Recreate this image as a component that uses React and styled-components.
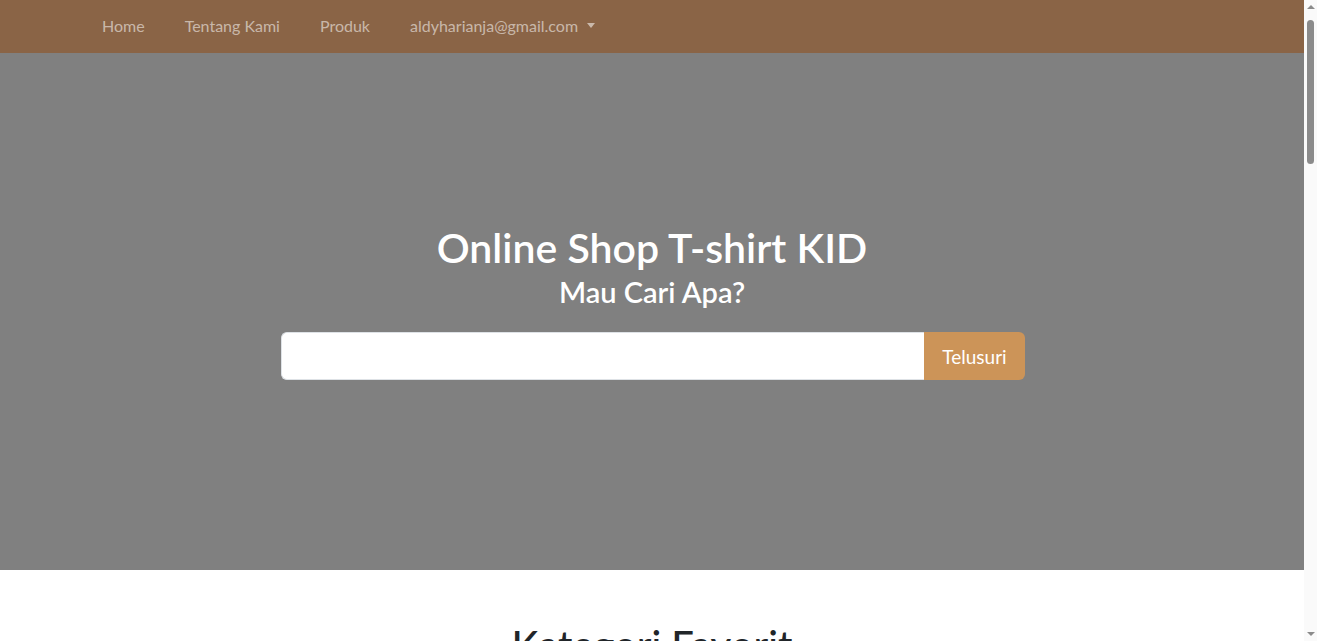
import React from 'react';
import styled, { createGlobalStyle } from 'styled-components';

const GlobalStyle = createGlobalStyle`
  * { box-sizing: border-box; }
  html, body {
    margin: 0;
    padding: 0;
    font-family: "Lato", "Liberation Sans", sans-serif;
    color: #212529;
    background: #fff;
  }
  body { padding-right: 13px; }
`;

// fake classic scrollbar, sits over the right edge of the window
const ScrollBar = styled.div`
  position: fixed;
  top: 0;
  right: 0;
  width: 13px;
  height: 100vh;
  background: #fafafa;
  display: flex;
  flex-direction: column;
  align-items: center;
  justify-content: space-between;
  padding: 5px 0;
`;

const ScrollArrow = styled.span`
  width: 0;
  height: 0;
  border-left: 4px solid transparent;
  border-right: 4px solid transparent;
  ${p => (p.$down ? 'border-top: 4px solid #8b8b8b;' : 'border-bottom: 4px solid #8b8b8b;')}
`;

const ScrollTrack = styled.div`
  flex: 1;
  width: 100%;
  padding: 11px 3px;
`;

const ScrollThumb = styled.div`
  width: 100%;
  height: 144px;
  border-radius: 4px;
  background: #8b8b8b;
`;

const Navbar = styled.nav`
  background: #8a6446;
  height: 53px;
  display: flex;
  align-items: center;
  padding-bottom: 3px;
`;

const NavContainer = styled.div`
  width: 100%;
  max-width: 1140px;
  margin: 0 auto;
  display: flex;
  align-items: center;
`;

const NavLink = styled.a`
  color: rgba(255, 255, 255, 0.55);
  font-size: 16px;
  padding: 0 20px;
  text-decoration: none;
  display: flex;
  align-items: center;
  cursor: pointer;
`;

const Caret = styled.span`
  display: inline-block;
  margin-left: 9px;
  border-top: 5px solid rgba(255, 255, 255, 0.55);
  border-left: 4px solid transparent;
  border-right: 4px solid transparent;
`;

const Hero = styled.header`
  background: #808080;
  height: 517px;
  display: flex;
  flex-direction: column;
  align-items: center;
  justify-content: center;
  color: #fff;
  padding-bottom: 20px;
`;

const Title = styled.h1`
  font-size: 41px;
  font-weight: 600;
  margin: 0 0 3px;
  line-height: 1.2;
`;

const Subtitle = styled.h3`
  font-size: 29px;
  font-weight: 600;
  margin: 0 0 23px;
  line-height: 1.2;
`;

const SearchGroup = styled.form`
  display: flex;
  width: 744px;
  height: 48px;
  margin-left: 2px;
`;

const SearchInput = styled.input`
  flex: 1;
  border: 1px solid #dee2e6;
  border-right: none;
  border-radius: 6px 0 0 6px;
  background: #fff;
  font-size: 18px;
  padding: 0 16px;
  outline: none;
`;

const SearchButton = styled.button`
  width: 101px;
  border: none;
  border-radius: 0 6px 6px 0;
  background: #cc9458;
  color: #fff;
  font-family: inherit;
  font-size: 19px;
  cursor: pointer;
`;

const Section = styled.section`
  padding: 51px 0 60px;
  text-align: center;
`;

const SectionTitle = styled.h2`
  font-size: 40px;
  font-weight: 500;
  margin: 0 0 40px;
  line-height: 1.2;
`;

const Lead = styled.p`
  max-width: 800px;
  margin: 0 auto;
  font-size: 18px;
  line-height: 1.6;
`;

const CardGrid = styled.div`
  max-width: 1116px;
  margin: 0 auto;
  display: grid;
  grid-template-columns: repeat(3, 1fr);
  gap: 24px;
`;

const CategoryCard = styled.div`
  height: 300px;
  border-radius: 8px;
  background: ${p => p.$bg};
  display: flex;
  align-items: center;
  justify-content: center;
  color: #fff;
  font-size: 24px;
  font-weight: 600;
`;

const ProductCard = styled.div`
  border: 1px solid #dee2e6;
  border-radius: 8px;
  overflow: hidden;
  text-align: left;
`;

const ProductImage = styled.div`
  height: 220px;
  background: #e9ecef;
`;

const ProductBody = styled.div`
  padding: 16px;
  font-size: 16px;
`;

const Footer = styled.footer`
  background: #8a6446;
  color: #fff;
  text-align: center;
  padding: 24px 0;
  font-size: 15px;
`;

const categories = [
  { name: 'Baju Anak Laki-laki', bg: '#a9825f' },
  { name: 'Baju Anak Perempuan', bg: '#b98f6a' },
  { name: 'Baju Bayi', bg: '#c9a07a' },
];

const products = ['Kaos Polos', 'Kaos Motif', 'Kaos Karakter', 'Kaos Sablon', 'Kaos Lengan Panjang', 'Kaos Oblong'];

export default function App() {
  return (
    <>
      <GlobalStyle />
      <Navbar>
        <NavContainer>
          <NavLink>Home</NavLink>
          <NavLink>Tentang Kami</NavLink>
          <NavLink>Produk</NavLink>
          <NavLink>
            aldyharianja@gmail.com
            <Caret />
          </NavLink>
        </NavContainer>
      </Navbar>
      <Hero>
        <Title>Online Shop T-shirt KID</Title>
        <Subtitle>Mau Cari Apa?</Subtitle>
        <SearchGroup onSubmit={e => e.preventDefault()}>
          <SearchInput type="text" />
          <SearchButton type="submit">Telusuri</SearchButton>
        </SearchGroup>
      </Hero>
      <Section>
        <SectionTitle>Kategori Favorit</SectionTitle>
        <CardGrid>
          {categories.map(c => (
            <CategoryCard key={c.name} $bg={c.bg}>{c.name}</CategoryCard>
          ))}
        </CardGrid>
      </Section>
      <Section>
        <SectionTitle>Tentang Kami</SectionTitle>
        <Lead>Toko online kaos anak dengan bahan berkualitas dan harga terjangkau.</Lead>
      </Section>
      <Section>
        <SectionTitle>Produk</SectionTitle>
        <CardGrid>
          {products.map(p => (
            <ProductCard key={p}>
              <ProductImage />
              <ProductBody>{p}</ProductBody>
            </ProductCard>
          ))}
        </CardGrid>
      </Section>
      <Footer>Copyright © Online Shop T-shirt KID</Footer>
      <ScrollBar>
        <ScrollArrow />
        <ScrollTrack>
          <ScrollThumb />
        </ScrollTrack>
        <ScrollArrow $down />
      </ScrollBar>
    </>
  );
}
